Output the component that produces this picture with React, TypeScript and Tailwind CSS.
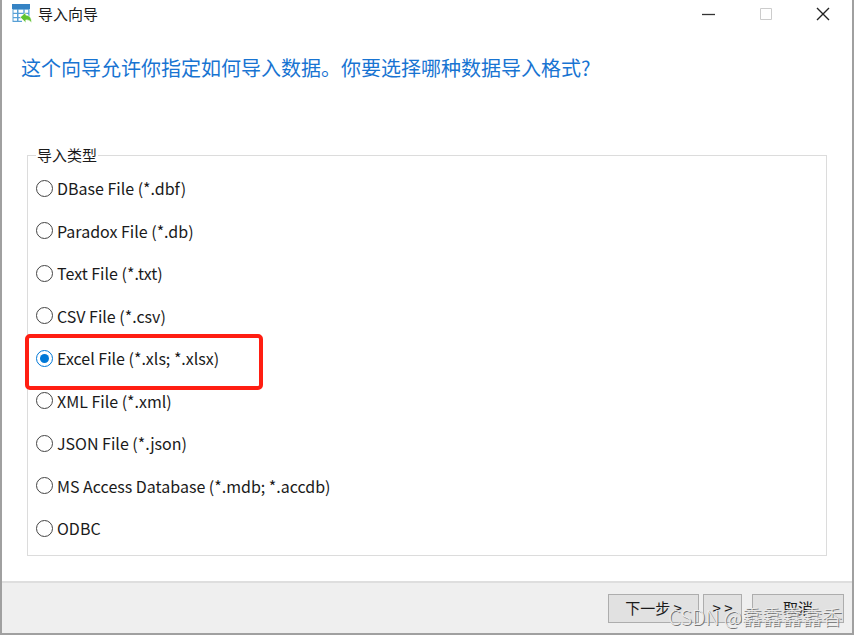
import { useState } from "react";

const IMPORT_TYPES = [
  "DBase File (*.dbf)",
  "Paradox File (*.db)",
  "Text File (*.txt)",
  "CSV File (*.csv)",
  "Excel File (*.xls; *.xlsx)",
  "XML File (*.xml)",
  "JSON File (*.json)",
  "MS Access Database (*.mdb; *.accdb)",
  "ODBC",
];

function AppIcon() {
  return (
    <svg width="20" height="20" viewBox="0 0 20 20" aria-hidden="true">
      <path d="M0.500 1h17v17h-17z" fill="#58a0d6" />
      <path d="M0 0h18v5H0z" fill="#3583c4" />
      <path
        d="M1.500 5.800H5v3H1.500zM6.500 5.800h4.800v3H6.500zM12.700 5.800h3.500v3h-3.500zM1.500 10H5v3H1.500zM6.500 10h4.800v3H6.500zM12.700 10h3.500v3h-3.500zM1.500 14.200H5v2.600H1.500zM6.500 14.200h4.800v2.600H6.500z"
        fill="#fff"
      />
      <path d="M10 13h8.500v6H10z" fill="#fff" />
      <path
        d="M8.200 13.200 13.800 8.200v2.900c3.800.2 6 3 5.700 8-1.200-2.300-3-3.400-5.700-3.200v2.800z"
        fill="#5fc32f"
        stroke="#fff"
        strokeWidth="0.6"
      />
    </svg>
  );
}

function TitleBar() {
  return (
    <header className="flex h-7 items-center justify-between pr-[21px] pl-2.5">
      <div className="flex items-center gap-1.5">
        <AppIcon />
        <h1 className="text-[15px] leading-5">导入向导</h1>
      </div>

      <div className="flex items-center gap-[41px]">
        <button type="button" aria-label="最小化">
          <svg width="16" height="16" viewBox="0 0 16 16">
            <path d="M1 8.500h13" stroke="#333" strokeWidth="1.300" />
          </svg>
        </button>
        <button type="button" aria-label="最大化" disabled>
          <svg width="16" height="16" viewBox="0 0 16 16">
            <path d="M2.500 2.500h11v11h-11z" fill="none" stroke="#ccc" />
          </svg>
        </button>
        <button type="button" aria-label="关闭">
          <svg width="16" height="16" viewBox="0 0 16 16">
            <path d="M2 2l12 12M14 2L2 14" stroke="#222" strokeWidth="1.400" />
          </svg>
        </button>
      </div>
    </header>
  );
}

export default function App() {
  const [selected, setSelected] = useState("Excel File (*.xls; *.xlsx)");

  return (
    <div className="flex min-h-screen bg-white pr-1 pb-px font-['Noto_Sans_CJK_SC',sans-serif] text-[15px] text-[#1a1a1a]">
      <div className="flex min-w-0 grow flex-col border-x-2 border-b-2 border-[#a0a0a0]">
        <TitleBar />

        <main className="grow px-[25px] pt-6">
          <h2 className="-ml-1.5 text-xl leading-8 text-[#1874d2]">
            这个向导允许你指定如何导入数据。你要选择哪种数据导入格式?
          </h2>

          <fieldset className="mt-[63px] border border-[#dcdcdc] px-2 pt-[13px] pb-[15px]">
            <legend className="px-px leading-4">导入类型</legend>
            <div className="flex h-[364px] flex-col justify-between text-base">
              {IMPORT_TYPES.map((type) => (
                <div key={type} className="relative flex h-6 items-center">
                  {type.startsWith("Excel") && (
                    <span className="pointer-events-none absolute -top-3 -left-[11px] h-14 w-[238px] rounded-[5px] border-4 border-[#ff1e12]" />
                  )}
                  <label className="flex items-center gap-1">
                    <input
                      type="radio"
                      name="import-type"
                      value={type}
                      checked={selected === type}
                      onChange={() => setSelected(type)}
                      className="size-[17px] appearance-none rounded-full border border-[#444] bg-white checked:border-[#0078d7] checked:bg-[#0078d7] checked:bg-clip-content checked:p-[3px]"
                    />
                    {type}
                  </label>
                </div>
              ))}
            </div>
          </fieldset>
        </main>

        <footer className="relative flex h-[52px] items-center justify-end border-t-2 border-[#dedede] bg-[#efefef] pr-2">
          <button
            type="button"
            className="h-[29px] w-[91px] border border-[#adadad] bg-[#e1e1e1]"
          >
            下一步 &gt;
          </button>
          <button
            type="button"
            className="ml-1 h-[29px] w-[39px] border border-[#adadad] bg-[#e1e1e1]"
          >
            &gt; &gt;
          </button>
          <button
            type="button"
            className="ml-2.5 h-[29px] w-[92px] border border-[#adadad] bg-[#e1e1e1]"
          >
            取消
          </button>
          <span className="pointer-events-none absolute right-2.5 bottom-0 text-xl leading-8 font-light text-[#ececec] [text-shadow:1px_1px_0_#777]">
            CSDN @馫馫馫馫香
          </span>
        </footer>
      </div>
    </div>
  );
}
